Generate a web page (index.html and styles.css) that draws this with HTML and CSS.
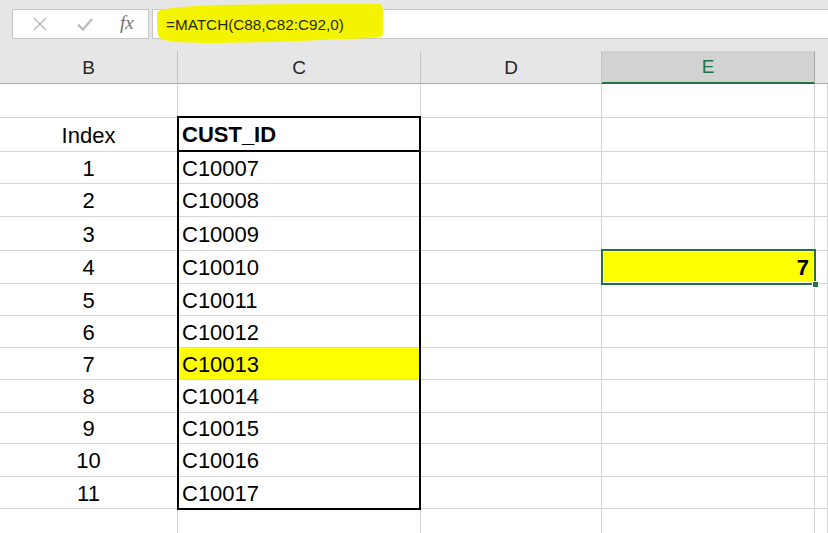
FILE: index.html
```html
<!DOCTYPE html>
<html>
<head>
<meta charset="utf-8">
<link rel="stylesheet" href="styles.css">
</head>
<body>
<div class="fbar">
  <div class="namebox">
    <svg class="ico" width="16" height="16" viewBox="0 0 16 16"><path d="M2 2 L14 14 M14 2 L2 14" stroke="#bdbdbd" stroke-width="1.6" fill="none"/></svg>
    <svg class="ico" width="18" height="16" viewBox="0 0 18 16"><path d="M2 8.5 L7 13.5 L16 3" stroke="#bdbdbd" stroke-width="2.4" fill="none"/></svg>
    <span class="fx">fx</span>
  </div>
  <div class="finput"><span class="ftext">=MATCH(C88,C82:C92,0)</span></div>
  <svg class="mark" width="232" height="44" viewBox="0 0 232 44"><path d="M2 10 C2 6 20 4 60 2 L150 1 L222 1 C227 1 228 3 228 8 L228 31 C228 35 220 35 190 36 L120 39 L60 40 C25 40 8 39 4 34 C2 30 2 20 2 10 Z" fill="#f4f400"/></svg>
</div>
<div class="sheet">
  <div class="c h">B</div><div class="c h">C</div><div class="c h">D</div><div class="c h sel">E</div><div class="c h f"></div>

  <div class="c"></div><div class="c"></div><div class="c"></div><div class="c"></div><div class="c"></div>

  <div class="c n">Index</div><div class="c t b hd">CUST_ID</div><div class="c"></div><div class="c"></div><div class="c"></div>
  <div class="c n">1</div><div class="c t">C10007</div><div class="c"></div><div class="c"></div><div class="c"></div>
  <div class="c n">2</div><div class="c t">C10008</div><div class="c"></div><div class="c"></div><div class="c"></div>
  <div class="c n">3</div><div class="c t">C10009</div><div class="c"></div><div class="c"></div><div class="c"></div>
  <div class="c n">4</div><div class="c t">C10010</div><div class="c"></div><div class="c r b y">7</div><div class="c"></div>
  <div class="c n">5</div><div class="c t">C10011</div><div class="c"></div><div class="c"></div><div class="c"></div>
  <div class="c n">6</div><div class="c t">C10012</div><div class="c"></div><div class="c"></div><div class="c"></div>
  <div class="c n">7</div><div class="c t y">C10013</div><div class="c"></div><div class="c"></div><div class="c"></div>
  <div class="c n">8</div><div class="c t">C10014</div><div class="c"></div><div class="c"></div><div class="c"></div>
  <div class="c n">9</div><div class="c t">C10015</div><div class="c"></div><div class="c"></div><div class="c"></div>
  <div class="c n">10</div><div class="c t">C10016</div><div class="c"></div><div class="c"></div><div class="c"></div>
  <div class="c n">11</div><div class="c t">C10017</div><div class="c"></div><div class="c"></div><div class="c"></div>
  <div class="c"></div><div class="c"></div><div class="c"></div><div class="c"></div><div class="c"></div>

  <div class="tbox"></div>
  <div class="selbox"></div>
</div>
</body>
</html>
```
FILE: styles.css
```css
html, body {
  margin: 0;
  padding: 0;
  background: #ffffff;
  overflow: hidden;
}
body {
  width: 828px;
  height: 533px;
  font-family: "Liberation Sans", Arial, sans-serif;
}
.fbar {
  position: relative;
  height: 51px;
  box-sizing: border-box;
  background: #e6e6e6;
  padding-top: 9px;
  display: flex;
  align-items: flex-start;
}
.namebox {
  margin-left: 12px;
  width: 137px;
  height: 30px;
  box-sizing: border-box;
  background: #ffffff;
  border: 1px solid #c6c6c6;
  display: flex;
  align-items: center;
  padding-left: 19px;
}
.ico {
  display: block;
}
.namebox .ico:first-child {
  margin-right: 28px;
}
.namebox .ico:nth-child(2) {
  margin-right: 26px;
}
.fx {
  font-family: "Liberation Serif", "DejaVu Serif", serif;
  font-style: italic;
  font-size: 19px;
  color: #707070;
  line-height: 1;
  margin-top: -3px;
}
.finput {
  margin-left: 3px;
  flex: 1;
  height: 30px;
  box-sizing: border-box;
  background: #ffffff;
  border: 1px solid #c6c6c6;
  border-right: none;
  display: flex;
  align-items: center;
}
.ftext {
  position: relative;
  z-index: 2;
  margin-left: 13px;
  font-size: 15.3px;
  color: #2a2a00;
  padding-top: 1px;
}
.mark {
  position: absolute;
  left: 155px;
  top: 3px;
  z-index: 1;
}
.sheet {
  position: relative;
  display: grid;
  grid-template-columns: 178px 243px 181px 213px 1fr;
  grid-template-rows: 33px 34px 34px 32px 33px 34px 33px 32px 32px 32px 33px 31px 33px 32px 33px;
}
.c {
  box-sizing: border-box;
  border-right: 1px solid #d4d4d4;
  border-bottom: 1px solid #d4d4d4;
  display: flex;
  align-items: center;
  font-size: 22px;
  color: #000000;
  padding-top: 2px;
  white-space: nowrap;
  overflow: hidden;
}
.h {
  background: #e6e6e6;
  border-right: 1px solid #c4c4c4;
  border-bottom: 1px solid #ababab;
  justify-content: center;
  font-size: 19px;
  color: #262626;
  padding-top: 1px;
}
.h.sel {
  background: #d2d2d2;
  color: #217346;
  border-bottom: 2px solid #217346;
  border-right: 1px solid #ababab;
}
.h.f {
  border-right: none;
}
.n {
  justify-content: center;
}
.t {
  padding-left: 4px;
}
.b {
  font-weight: bold;
}
.hd {
  border-bottom: 2px solid #000000;
}
.r {
  justify-content: flex-end;
  padding-right: 5px;
}
.y {
  background: #ffff00;
}
.tbox {
  position: absolute;
  grid-column: 2 / 3;
  grid-row: 3 / 15;
  top: -2px;
  bottom: -1px;
  left: -1px;
  right: 0;
  border: 2px solid #000000;
  pointer-events: none;
  z-index: 2;
}
.selbox {
  position: absolute;
  grid-column: 4 / 5;
  grid-row: 7 / 8;
  top: -2px;
  bottom: -1px;
  left: -1px;
  right: -1px;
  border: 2px solid #217346;
  box-shadow: inset 0 0 0 1px #ffffff;
  pointer-events: none;
  z-index: 3;
}
.selbox::after {
  content: "";
  position: absolute;
  right: -5px;
  bottom: -5px;
  width: 5px;
  height: 5px;
  background: #217346;
  border: 1px solid #ffffff;
}
```
